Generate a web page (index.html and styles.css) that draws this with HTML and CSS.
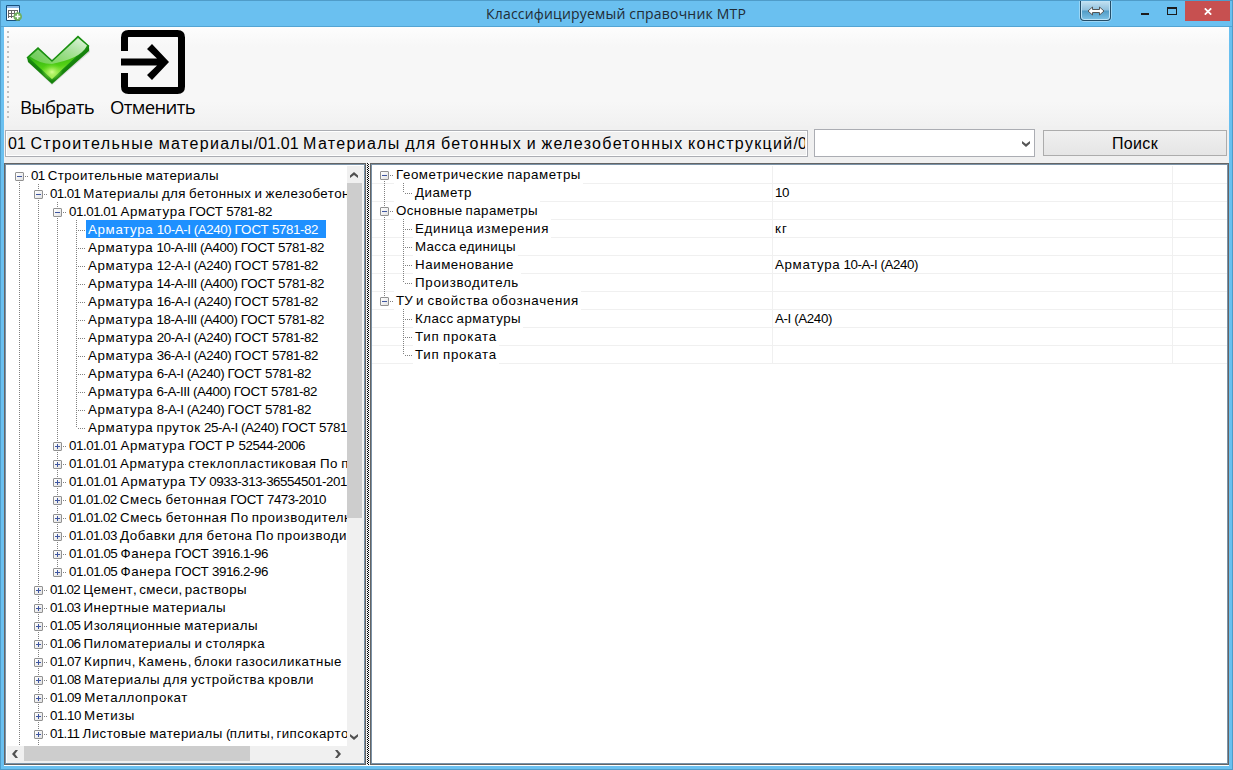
FILE: index.html
```html
<!DOCTYPE html>
<html lang="ru">
<head>
<meta charset="utf-8">
<title>Классифицируемый справочник МТР</title>
<link rel="stylesheet" href="styles.css">
</head>
<body>
<div class="window">
  <header class="titlebar">
    <svg class="app-icon" width="16" height="16" viewBox="0 0 16 16">
      <path d="M.5.5h13v15H.5z" fill="#fff" stroke="#17507c"/>
      <path d="M1 1h12v2H1z" fill="#8db9e8"/>
      <path d="M2 5.500h10M2 8.500h10M2 11.500h7M2.500 5v8M5.500 5v8M8.500 5v8M11.500 5v4" stroke="#666" fill="none"/>
      <circle cx="11.700" cy="11.500" r="4.300" fill="#6faf5f"/>
      <path d="M11.700 9v5M9.200 11.500h5" stroke="#fff" stroke-width="1.300"/>
    </svg>
    <h1 class="title fit" data-w="260">Классифицируемый справочник МТР</h1>
    <div class="win-buttons">
      <div class="resize">
        <svg width="18" height="10" viewBox="0 0 18 10"><path d="M1 5l4.500-4v2.500h7V1L17 5l-4.500 4V6.500h-7V9z" fill="#fff" stroke="#555"/></svg>
      </div>
      <svg class="min" width="8" height="14"><path d="M0 10h8v2H0z" fill="#1c1c1c"/></svg>
      <svg class="max" width="10" height="14"><path d="M0 4h10v8H0zM1 6v5h8V6z" fill="#1c1c1c" fill-rule="evenodd"/></svg>
      <div class="close"><svg width="8" height="7" viewBox="0 0 8 7"><path d="M.8.3l6.400 6.400M7.200.3L.8 6.700" stroke="#fff" stroke-width="1.700"/></svg></div>
    </div>
  </header>

  <main class="client">
    <div class="toolbar">
      <div class="grip"></div>
      <div class="tool tool-ok">
        <svg width="64" height="64" viewBox="0 0 64 64">
          <defs>
            <linearGradient id="face" x1="0" y1="0" x2=".25" y2="1">
              <stop offset="0" stop-color="#279b25"/><stop offset=".45" stop-color="#2eae13"/><stop offset=".75" stop-color="#52d014"/><stop offset="1" stop-color="#b5f45a"/>
            </linearGradient>
            <linearGradient id="gloss" x1="0" y1="1" x2="1" y2="0">
              <stop offset="0" stop-color="#8ad975" stop-opacity=".55"/><stop offset="1" stop-color="#f0fbee" stop-opacity=".95"/>
            </linearGradient>
            <radialGradient id="glow" cx=".5" cy=".5" r=".5">
              <stop offset="0" stop-color="#d8ff90"/><stop offset="1" stop-color="#7be330" stop-opacity="0"/>
            </radialGradient>
          </defs>
          <path d="M2 32l24 23L64 22v-3l-5-7-33 17-15-7L2 28z" fill="#999" opacity=".3"/>
          <path d="M1 27l1 5 24 22 37-33v-6L25 45z" fill="#16830c"/>
          <path d="M1.500 27.500L12 18l14 13L52 6.500l10.500 9.500L26 50z" fill="url(#face)" stroke="#188d10" stroke-width="1.400"/>
          <ellipse cx="26" cy="42" rx="11" ry="9" fill="url(#glow)"/>
          <path d="M4 26.500l8-7L26 32 52 8l9 7.500C56 26 43 30 26 34 18 34 10 31 4 26.500z" fill="url(#gloss)"/>
        </svg>
        <span class="fit tool-label" data-w="74">Выбрать</span>
      </div>
      <div class="tool tool-cancel">
        <svg width="64" height="64" viewBox="0 0 64 64">
          <path d="M3.500 21V7.500Q3.500 3.500 7.500 3.500h49q4 0 4 4v49q0 4-4 4h-49q-4 0-4-4V43" fill="none" stroke="#000" stroke-width="7"/>
          <path d="M0 28.500h36L26 19l5-5 17 18-17 18-5-5 10-9.500H0z"/>
        </svg>
        <span class="fit tool-label" data-w="85">Отменить</span>
      </div>
    </div>

    <div class="searchbar">
      <div class="path"><span class="fit mixed" data-w="790" data-tail="01.01.01">01 Строительные материалы/01.01 Материалы для бетонных и железобетонных конструкций/</span></div>
      <div class="combo"><svg width="8" height="6" viewBox="0 0 8 6"><path d="M0 0l4 3 4-3v2.500L4 6 0 2.500z" fill="#555"/></svg></div>
      <div class="button"><span class="fit" data-w="46">Поиск</span></div>
    </div>

    <div class="split">
      <section class="panel left">
        <div class="tree-area">
          <div class="tree" id="tree"></div>
          <div class="vscroll">
            <svg class="up" width="8" height="6" viewBox="0 0 8 6"><path d="M0 6l4-3 4 3V3.500L4 0 0 3.500z" fill="#505050"/></svg>
            <div class="vthumb"></div>
            <svg class="down" width="8" height="6" viewBox="0 0 8 6"><path d="M0 0l4 3 4-3v2.500L4 6 0 2.500z" fill="#505050"/></svg>
          </div>
        </div>
        <div class="hscroll">
          <svg class="prev" width="6" height="8" viewBox="0 0 6 8"><path d="M6 0L3 4l3 4H3.500L0 4l3.500-4z" fill="#505050"/></svg>
          <div class="hthumb"></div>
          <svg class="next" width="6" height="8" viewBox="0 0 6 8"><path d="M0 0l3 4-3 4h2.500L6 4 2.500 0z" fill="#505050"/></svg>
        </div>
      </section>
      <div class="splitter"></div>
      <section class="panel right" id="props"></section>
    </div>
  </main>
</div>
<script src="app.js"></script>
</body>
</html>
```

FILE: styles.css
```css
* { box-sizing: border-box; }
body { margin: 0; font-family: "Liberation Sans", sans-serif; color: #000; }
svg { display: block; flex: none; }

.window {
  width: 1233px; height: 770px; padding: 0 3px 3px; overflow: hidden;
  display: flex; flex-direction: column; background: #6ac0f0;
  border: 1px solid #4f9cc9;
}
.titlebar { position: relative; height: 26px; flex: none; border-bottom: 1px solid #53a4d3; margin: 0 -3px; padding: 0 3px; display: flex; justify-content: space-between; }
.app-icon { margin: 4px 0 0 2px; }
.title { position: absolute; left: 485px; top: 3px; margin: 0; font: 400 14px/20px "Open Sans", "Noto Sans", sans-serif; color: #1f2c36; }
.win-buttons { display: flex; }
.resize {
  width: 31px; height: 20px; margin-right: 30px; display: flex; align-items: center; justify-content: center;
  border: 1px solid #234d68; border-top: 0; border-radius: 0 0 4px 4px;
  background: linear-gradient(#c5e2f2, #8fc0dd 48%, #519bc5 52%, #7fc3e6); box-shadow: inset 0 0 0 1px #bfe3f6, 0 0 0 1px #9bd6f5;
}
.min { margin-right: 18px; margin-top: 2px; }
.max { margin-right: 8px; margin-top: 2px; }
.close { width: 45px; height: 20px; margin-right: -1px; background: #c75050; display: flex; align-items: center; justify-content: center; }

.client { flex: 1; min-height: 0; display: flex; flex-direction: column; background: #f0f0f0; }
.toolbar { height: 99px; flex: none; display: flex; background: linear-gradient(#fdfdfd, #f7f7f7 20%, #f7f7f7 75%, #f1f1f1); }
.grip { width: 2px; height: 88px; margin: 4px 0 0 3px; background: repeating-linear-gradient(#c0c0c0 0 2px, transparent 2px 5px); }
.tool { display: flex; flex-direction: column; align-items: flex-start; font: 18.500px/26px "Open Sans", "Noto Sans", sans-serif; }
.tool-ok { width: 90px; margin-left: 11px; }
.tool-ok svg { margin: 3px 0 0 6px; }
.tool-cancel svg { margin: 3px 0 0 11px; }

.searchbar { display: flex; height: 36px; flex: none; font-size: 16px; padding: 3px 2px 0 1px; }
.path { width: 803px; height: 27px; margin-top: 1px; border: 1px solid #abadb3; box-shadow: inset 0 0 0 1px #fff; padding: 0 2px; line-height: 26px; overflow: hidden; }
.path > span { display: block; overflow: hidden; }
.combo { width: 221px; height: 28px; margin-left: 6px; border: 1px solid #abadb3; background: #fff; display: flex; justify-content: flex-end; align-items: center; padding: 2px 4px 0 0; }
.button { width: 184px; height: 26px; margin: 1px 0 0 8px; border: 1px solid #acacac; background: linear-gradient(#f0f0f0, #e5e5e5); text-align: center; line-height: 25px; }

.split { flex: 1; min-height: 0; display: flex; padding-top: 1px; border-bottom: 1px solid #fff; }
.panel { border: 1px solid #646464; box-shadow: inset 0 0 0 1px #7b93a8; background: #fff; font-size: 13.333px; overflow: hidden; }
.left { width: 362px; display: flex; flex-direction: column; padding: 2px 1px 1px 2px; }
.splitter { width: 4px; padding: 0 1px; background: conic-gradient(#000 25%, #fff 0 50%, #000 0 75%, #fff 0) 1px 0 / 2px 2px content-box, #f0f0f0; }
.right { flex: 1; padding: 2px 1px; }
.tree-area { flex: 1; min-height: 0; display: flex; }
.tree { flex: 1; overflow: hidden; padding-left: 3px; min-width: 0; }
.row { display: flex; height: 18px; white-space: pre; }
.col { width: 19px; flex: none; position: relative; }
.col::before { content: ""; position: absolute; left: 9px; top: 0; width: 1px; height: 18px; background: repeating-linear-gradient(#808080 0 1px, transparent 1px 2px); }
.col.half::before { height: 10px; }
.col.bottom::before { top: 10px; height: 8px; }
.col.none::before { display: none; }
.col.node::after { content: ""; position: absolute; left: 10px; right: 0; top: 10px; height: 1px; background: repeating-linear-gradient(90deg, transparent 0 1px, #808080 1px 2px); }
.box { position: absolute; z-index: 1; left: 5px; top: 6px; width: 9px; height: 9px; border: 1px solid #919191; border-radius: 1px; background: linear-gradient(135deg, #fff, #e2e2e2); }
.box::before, .box.plus::after { content: ""; position: absolute; background: #3f56a0; }
.box::before { left: 1px; top: 3px; width: 5px; height: 1px; }
.box.plus::after { left: 3px; top: 1px; width: 1px; height: 5px; }
.text { padding: 0 8px 0 2px; height: 18px; line-height: 19px; }
.selected .text { background: #1e90ff; color: #fff; }

.vscroll { width: 17px; flex: none; background: #f0f0f0; display: flex; flex-direction: column; }
.vscroll svg { margin-left: 3px; }
.up { margin-top: 6px; }
.vthumb { width: 15px; height: 335px; margin-top: 5px; background: #cdcdcd; }
.down { margin-top: auto; margin-bottom: 6px; }
.hscroll { height: 17px; flex: none; background: #f0f0f0; display: flex; }
.hscroll svg { margin-top: 4px; }
.prev { margin-left: 5px; }
.hthumb { width: 226px; height: 15px; margin-left: 6px; background: #cdcdcd; }
.next { margin-left: 85px; }

.prop { display: grid; grid-template-columns: 401px 400px 1fr; height: 18px; border-bottom: 1px solid #f0f0f0; white-space: pre; }
.prop .name { display: flex; padding-left: 3px; border-right: 1px solid #f0f0f0; height: 17px; }
.prop .value { border-right: 1px solid #f0f0f0; padding-left: 2px; line-height: 17px; }
.prop .text { background: #fff; height: 19px; margin-top: -1px; padding-right: 2px; position: relative; }
.prop .col { top: -1px; }

.fit { white-space: pre; letter-spacing: var(--d, 0); }
.cyr { letter-spacing: calc(.04em + var(--d, 0px)); }
.caps { letter-spacing: calc(-.01em + var(--d, 0px)); }
.lat { letter-spacing: calc(-.04em + var(--d, 0px)); }
```

FILE: app.js
```js
// Tree rows: level, state (+ collapsed, - expanded, blank leaf), text, width of text, clipped rest
const rows = [
  [0, '-', '01 Строительные материалы', 188],
  [1, '-', '01.01 Материалы для бетонных и железобето', 292, 'нных конструкций'],
  [2, '-', '01.01.01 Арматура ГОСТ 5781-82', 203],
  [3, '', 'Арматура 10-A-I (A240) ГОСТ 5781-82', 230],
  [3, '', 'Арматура 10-A-III (A400) ГОСТ 5781-82', 236],
  [3, '', 'Арматура 12-A-I (A240) ГОСТ 5781-82', 230],
  [3, '', 'Арматура 14-A-III (A400) ГОСТ 5781-82', 236],
  [3, '', 'Арматура 16-A-I (A240) ГОСТ 5781-82', 230],
  [3, '', 'Арматура 18-A-III (A400) ГОСТ 5781-82', 236],
  [3, '', 'Арматура 20-A-I (A240) ГОСТ 5781-82', 230],
  [3, '', 'Арматура 36-A-I (A240) ГОСТ 5781-82', 230],
  [3, '', 'Арматура 6-A-I (A240) ГОСТ 5781-82', 223],
  [3, '', 'Арматура 6-A-III (A400) ГОСТ 5781-82', 229],
  [3, '', 'Арматура 8-A-I (A240) ГОСТ 5781-82', 223],
  [3, '', 'Арматура пруток 25-A-I (A240) ГОСТ 5781', 259, '-82'],
  [2, '+', '01.01.01 Арматура ГОСТ Р 52544-2006', 236],
  [2, '+', '01.01.01 Арматура стеклопластиковая По', 269, ' производителю'],
  [2, '+', '01.01.01 Арматура ТУ 0933-313-36554501-201', 278, '4'],
  [2, '+', '01.01.02 Смесь бетонная ГОСТ 7473-2010', 257],
  [2, '+', '01.01.02 Смесь бетонная По производител', 275, 'ю'],
  [2, '+', '01.01.03 Добавки для бетона По производи', 278, 'телю'],
  [2, '+', '01.01.05 Фанера ГОСТ 3916.1-96', 199],
  [2, '+', '01.01.05 Фанера ГОСТ 3916.2-96', 199],
  [1, '+', '01.02 Цемент, смеси, растворы', 197],
  [1, '+', '01.03 Инертные материалы', 176],
  [1, '+', '01.05 Изоляционные материалы', 208],
  [1, '+', '01.06 Пиломатериалы и столярка', 215],
  [1, '+', '01.07 Кирпич, Камень, блоки газосиликатные', 292],
  [1, '+', '01.08 Материалы для устройства кровли', 264],
  [1, '+', '01.09 Металлопрокат', 138],
  [1, '+', '01.10 Метизы', 85],
  [1, '+', '01.11 Листовые материалы (плиты, гипсокарт', 291, 'он)']
];

const props = [
  [0, 'Геометрические параметры', 185],
  [1, 'Диаметр', 57, '10', 14],
  [0, 'Основные параметры', 142],
  [1, 'Единица измерения', 134, 'кг', 13],
  [1, 'Масса единицы', 101],
  [1, 'Наименование', 99, 'Арматура 10-A-I (A240)', 143],
  [1, 'Производитель', 104],
  [0, 'ТУ и свойства обозначения', 183],
  [1, 'Класс арматуры', 106, 'A-I (A240)', 57],
  [1, 'Тип проката', 82],
  [1, 'Тип проката', 82]
];

const fitted = (text, width, tail = '') =>
  `<span class="fit mixed" data-w="${width}" data-tail="${tail}">${text}</span>`;
const box = state => state ? `<i class="box ${state === '+' ? 'plus' : ''}"></i>` : '';

document.getElementById('tree').innerHTML = rows.map(([level, state, text, width, tail], i) => {
  let cols = '';
  for (let c = 0; c < level; c++) cols += '<span class="col"></span>';
  const lastChild = level > 1 && rows[i + 1][0] < level;
  const shape = level === 0 ? 'bottom' : lastChild ? 'half' : '';
  cols += `<span class="col node ${shape}">${box(state)}</span>`;
  return `<div class="row ${i === 3 ? 'selected' : ''}">${cols}<span class="text">${fitted(text, width, tail)}</span></div>`;
}).join('') + '<div class="row"><span class="col"></span><span class="col"></span></div>';

document.getElementById('props').innerHTML = props.map(([level, name, width, value, valueWidth], i) => {
  const afterLastGroup = i > 7;
  const last = !props[i + 1] || props[i + 1][0] < level;
  const cols = level === 0
    ? `<span class="col node ${i === 0 ? 'bottom' : i === 7 ? 'half' : ''}">${box('-')}</span>`
    : `<span class="col ${afterLastGroup ? 'none' : ''}"></span><span class="col node ${last ? 'half' : ''}"></span>`;
  return `<div class="prop"><div class="name">${cols}<span class="text">${fitted(name, width)}</span></div>` +
    `<div class="value">${value ? fitted(value, valueWidth) : ''}</div><div></div></div>`;
}).join('');

// Cyrillic runs are set wider than digits and Latin letters
const runs = text => text.replace(/([А-Я]{2,})|([А-Яа-яё]+)|([^А-Яа-яё]+)/g,
  (m, caps, cyr) => `<span class="${caps ? 'caps' : cyr ? 'cyr' : 'lat'}">${m}</span>`);

document.querySelectorAll('.fit').forEach(el => {
  const text = el.textContent;
  const mixed = el.classList.contains('mixed');
  const html = mixed ? runs(text) : text;
  el.innerHTML = html;
  const range = document.createRange();
  range.selectNodeContents(el);
  const delta = (Number(el.dataset.w) - range.getBoundingClientRect().width) / text.length;
  el.style.setProperty('--d', delta.toFixed(4) + 'px');
  if (mixed && el.dataset.tail) el.innerHTML = html + runs(el.dataset.tail);
});
```
